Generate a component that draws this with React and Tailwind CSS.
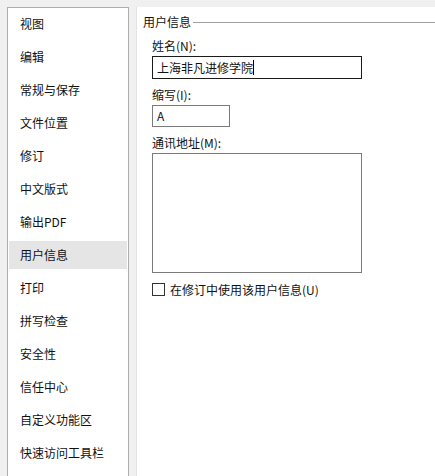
import React from 'react';

const FONT = { fontFamily: '"Noto Sans CJK SC", "Noto Sans", sans-serif' };

const items = [
  '视图',
  '编辑',
  '常规与保存',
  '文件位置',
  '修订',
  '中文版式',
  '输出PDF',
  '用户信息',
  '打印',
  '拼写检查',
  '安全性',
  '信任中心',
  '自定义功能区',
  '快速访问工具栏',
];

export default function App() {
  return (
    <div
      className="w-[435px] h-[476px] overflow-hidden bg-[#f0f0f0] flex gap-[7px] pt-[7px] pl-[7px] text-[12px] text-[#111111]"
      style={FONT}
    >
      {/* Left nav */}
      <div className="w-[122px] h-[480px] shrink-0 bg-white border border-[#adadad] pt-[2px] px-[1px] flex flex-col gap-[5px]">
        {items.map((name) => (
          <div
            key={name}
            className={`h-[28px] shrink-0 flex items-center pl-[11px] leading-none ${
              name === '用户信息' ? 'bg-[#e5e5e5]' : ''
            }`}
          >
            {name}
          </div>
        ))}
      </div>

      {/* Right content */}
      <div className="flex-1 h-[480px] bg-white border-l border-[#e3e3e3] pl-[6px]">
        <div className="flex items-center h-[16px] mt-[7px] leading-none">
          <span>用户信息</span>
          <div className="flex-1 h-px bg-[#a0a0a0] ml-[2px]" />
        </div>

        <div className="pl-[9px]">
          <div className="mt-[8px] h-[16px] flex items-center leading-none">姓名(N):</div>
          <div className="mt-[2px] w-[210px] h-[23px] border border-[#1a1a1a] flex items-center pl-[4px] leading-none">
            上海非凡进修学院
            <span className="inline-block w-px h-[15px] bg-black" />
          </div>

          <div className="mt-[8px] h-[16px] flex items-center leading-none">缩写(I):</div>
          <div className="mt-[2px] w-[78px] h-[22px] border border-[#7a7a7a] flex items-center pl-[4px] leading-none">
            A
          </div>

          <div className="mt-[8px] h-[16px] flex items-center leading-none">通讯地址(M):</div>
          <div className="mt-[2px] w-[210px] h-[120px] border border-[#7a7a7a]" />

          <div className="mt-[10px] flex items-center gap-[5px] leading-none">
            <span className="w-[13px] h-[13px] border border-[#333333] bg-white" />
            <span>在修订中使用该用户信息(U)</span>
          </div>
        </div>
      </div>
    </div>
  );
}
